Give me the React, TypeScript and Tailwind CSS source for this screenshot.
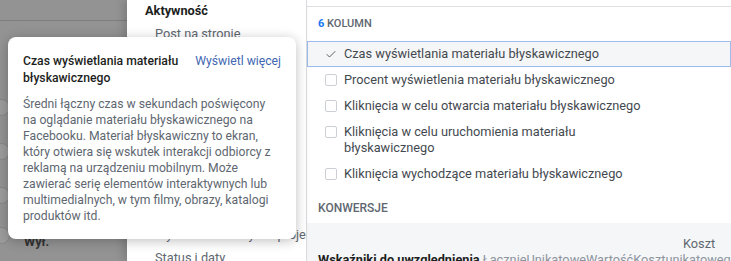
import { Check } from 'lucide-react';

const ROWS = [
  { label: 'Czas wyświetlania materiału błyskawicznego', checked: true },
  { label: 'Procent wyświetlenia materiału błyskawicznego', checked: false },
  { label: 'Kliknięcia w celu otwarcia materiału błyskawicznego', checked: false },
  { label: 'Kliknięcia w celu uruchomienia materiału błyskawicznego', checked: false },
  { label: 'Kliknięcia wychodzące materiału błyskawicznego', checked: false },
];

const TOGGLE_TOPS = ['top-[99px]', 'top-[143px]', 'top-[187px]', 'top-[227px]'];

export default function App() {
  return (
    <div
      className="relative flex h-[261px] w-[731px] overflow-hidden bg-white text-[12.75px] text-[#1c1e21]"
      style={{ fontFamily: 'Roboto, "Liberation Sans", sans-serif' }}
    >
      {/* dimmed page behind the panel */}
      <div className="relative w-[127px] shrink-0 bg-[#939393]">
        <div className="mt-[20px] border-t border-[#7e7e7e]" />
        {TOGGLE_TOPS.map((t) => (
          <div
            key={t}
            className={`absolute left-[-7px] ${t} h-[17px] w-[17px] rounded-full border border-[#858585] bg-[#9c9c9c]`}
          />
        ))}
        <div className="absolute left-[24px] top-[232px] font-bold text-[#333333]">Wył.</div>
      </div>

      {/* category list */}
      <div className="z-10 w-[179px] shrink-0 overflow-hidden bg-white pl-[18px] shadow-[-4px_0_8px_rgba(0,0,0,0.15)]">
        <div className="pt-[2px] font-bold leading-[17px]">Aktywność</div>
        <div className="mt-[6px] pl-[10px] leading-[17px] text-[#606770]">Post na stronie</div>
        <div className="mt-[184px] whitespace-nowrap pl-[10px] leading-[17px] text-[#606770]">
          Wyświetlenia i wyniki projektu
        </div>
        <div className="mt-[6px] pl-[10px] leading-[17px] text-[#606770]">Status i daty</div>
      </div>

      {/* column picker */}
      <div className="flex min-w-0 flex-1 flex-col border-l border-[#dddfe2]">
        <div className="h-[7px] shrink-0 border-b border-[#dddfe2]" />
        <div className="pl-[11px] pt-[10px] text-[11px] font-medium leading-[14px] text-[#606770]">
          <span className="font-bold text-[#1877f2]">6</span> KOLUMN
        </div>
        <div className="mt-[10px] flex flex-col">
          {ROWS.map((row) => (
            <div
              key={row.label}
              className={`flex items-start gap-[7px] py-[4px] pl-[17px] ${
                row.checked ? 'border border-[#9cbcf0] bg-[#f5f6f7]' : 'border border-transparent'
              }`}
            >
              <div
                className={`mt-[2px] flex h-[12px] w-[12px] shrink-0 items-center justify-center rounded-[2px] ${
                  row.checked ? '' : 'border border-[#ccd0d5] bg-white'
                }`}
              >
                {row.checked && <Check className="h-[13px] w-[13px] text-[#444950]" strokeWidth={1.75} />}
              </div>
              <div className="max-w-[310px] leading-[16px] text-[#444950]">{row.label}</div>
            </div>
          ))}
        </div>
        <div className="pl-[11px] pt-[13px] text-[12px] font-medium leading-[16px] text-[#606770]">KONWERSJE</div>
        <div className="mt-[7px] flex-1 overflow-hidden bg-[#f5f6f7] pl-[11px] pt-[13px]">
          <div className="pl-[365px] leading-[16px] text-[#606770]">Koszt</div>
          <div className="whitespace-nowrap leading-[16px]">
            <span className="font-bold">Wskaźniki do uwzględnienia</span>{' '}
            <span className="text-[#8d949e]">ŁącznieUnikatoweWartośćKosztunikatowego</span>
          </div>
        </div>
      </div>

      {/* tooltip */}
      <div className="absolute left-[8px] top-[37px] z-20 w-[288px] rounded-[8px] bg-white px-[15px] pb-[15px] pt-[16px] text-[12.2px] shadow-[0_2px_12px_rgba(0,0,0,0.25)]">
        <div className="flex items-start justify-between gap-[8px]">
          <div className="w-[170px] font-medium leading-[17px]">Czas wyświetlania materiału błyskawicznego</div>
          <div className="whitespace-nowrap leading-[17px] text-[#4267b2]">Wyświetl więcej</div>
        </div>
        <p className="mt-[9px] leading-[16px] text-[#606770]">
          Średni łączny czas w sekundach poświęcony na oglądanie materiału błyskawicznego na Facebooku. Materiał
          błyskawiczny to ekran, który otwiera się wskutek interakcji odbiorcy z reklamą na urządzeniu mobilnym. Może
          zawierać serię elementów interaktywnych lub multimedialnych, w tym filmy, obrazy, katalogi produktów itd.
        </p>
      </div>
    </div>
  );
}
